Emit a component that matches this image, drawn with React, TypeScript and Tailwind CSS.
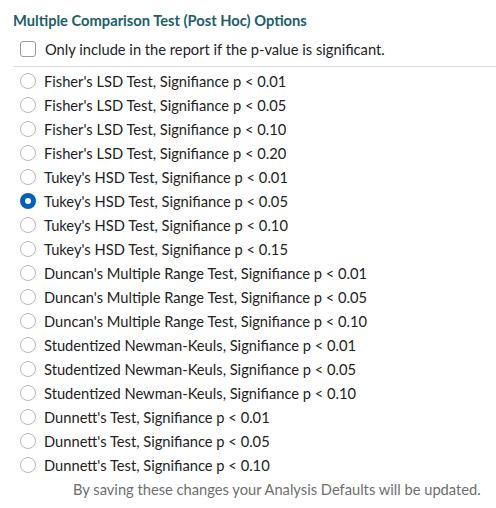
import { useState } from "react";

const options = [
  "Fisher's LSD Test, Signifiance p < 0.01",
  "Fisher's LSD Test, Signifiance p < 0.05",
  "Fisher's LSD Test, Signifiance p < 0.10",
  "Fisher's LSD Test, Signifiance p < 0.20",
  "Tukey's HSD Test, Signifiance p < 0.01",
  "Tukey's HSD Test, Signifiance p < 0.05",
  "Tukey's HSD Test, Signifiance p < 0.10",
  "Tukey's HSD Test, Signifiance p < 0.15",
  "Duncan's Multiple Range Test, Signifiance p < 0.01",
  "Duncan's Multiple Range Test, Signifiance p < 0.05",
  "Duncan's Multiple Range Test, Signifiance p < 0.10",
  "Studentized Newman-Keuls, Signifiance p < 0.01",
  "Studentized Newman-Keuls, Signifiance p < 0.05",
  "Studentized Newman-Keuls, Signifiance p < 0.10",
  "Dunnett's Test, Signifiance p < 0.01",
  "Dunnett's Test, Signifiance p < 0.05",
  "Dunnett's Test, Signifiance p < 0.10",
];

function Radio({ checked }: { checked: boolean }) {
  return checked ? (
    <span className="flex h-4 w-4 shrink-0 items-center justify-center rounded-full bg-[#0060c0]">
      <span className="h-1.5 w-1.5 rounded-full bg-white" />
    </span>
  ) : (
    <span className="h-4 w-4 shrink-0 rounded-full border border-[#b5b5b5] bg-white" />
  );
}

export default function App() {
  const [selected, setSelected] = useState(5);

  return (
    <div className="h-[508px] w-[496px] bg-white font-['Lato','Open_Sans',sans-serif] text-[#222]">
      <div className="pl-[13px] pt-[11px]">
        <h2 className="text-[14.7px] font-bold leading-[18px] text-[#1b5e6c]">
          Multiple Comparison Test (Post Hoc) Options
        </h2>
        <label className="mt-[11px] flex items-center gap-[9px] pl-[7px] text-[14.7px] leading-[18px]">
          <span className="h-4 w-4 shrink-0 rounded-[3px] border border-[#9a9a9a] bg-white" />
          Only include in the report if the p-value is significant.
        </label>
        <hr className="mt-[8px] border-[#dcdcdc]" />
        <div className="mt-[2px] flex flex-col pl-[7px]">
          {options.map((o, i) => (
            <div
              key={i}
              onClick={() => setSelected(i)}
              className="flex h-6 cursor-pointer items-center gap-[8px] text-[14.7px]"
            >
              <Radio checked={selected === i} />
              <span>{o}</span>
            </div>
          ))}
        </div>
      </div>
      <p className="mt-[3px] pl-[73px] text-[14.7px] leading-[18px] text-[#6e6e6e]">
        By saving these changes your Analysis Defaults will be updated.
      </p>
    </div>
  );
}
